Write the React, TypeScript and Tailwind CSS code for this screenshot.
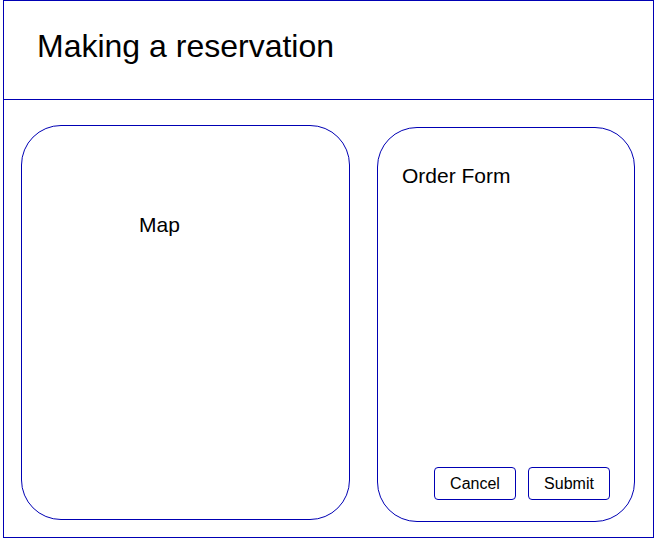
export default function App() {
  return (
    <div className="w-[657px] h-[538px] bg-white" style={{ fontFamily: '"Liberation Sans", Arial, sans-serif' }}>
      <div className="ml-[3px] w-[651px] h-[538px] border border-solid border-[#0000b4] flex flex-col">
        <div className="h-[99px] border-b border-solid border-[#0000b4] pl-[33px] pt-[27px]">
          <h1 className="text-[32px] leading-[37px] text-black">Making a reservation</h1>
        </div>
        <div className="flex items-start pl-[17px] pt-[25px]">
          <div className="w-[329px] h-[395px] border border-[#0000b4] rounded-[40px] pl-[117px] pt-[87px]">
            <div className="text-[21px] leading-[24px] text-black">Map</div>
          </div>
          <div className="ml-[27px] mt-[2px] w-[258px] h-[395px] border border-[#0000b4] rounded-[40px] flex flex-col justify-between">
            <div className="pl-[24px] pt-[36px] text-[21px] leading-[24px] text-black">Order Form</div>
            <div className="flex justify-end gap-[12px] pr-[24px] pb-[21px]">
              <button className="w-[82px] h-[33px] border border-[#0000b4] rounded-[4px] text-[16px] text-black bg-white">Cancel</button>
              <button className="w-[82px] h-[33px] border border-[#0000b4] rounded-[4px] text-[16px] text-black bg-white">Submit</button>
            </div>
          </div>
        </div>
      </div>
    </div>
  );
}
